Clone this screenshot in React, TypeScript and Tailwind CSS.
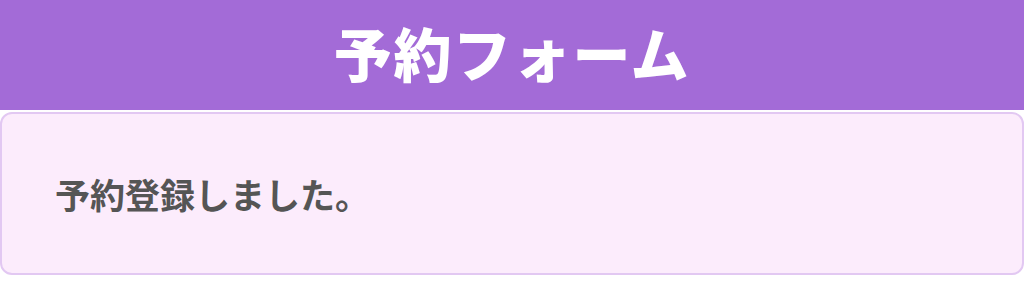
export default function App() {
  return (
    <div
      className="min-h-screen bg-white"
      style={{ fontFamily: '"Noto Sans CJK JP", "Noto Sans", sans-serif' }}
    >
      <header className="flex h-[110px] items-center justify-center bg-[#a36bd7] pb-[6px]">
        <h1 className="text-[58px] font-black leading-none tracking-[0.03em] text-white">
          予約フォーム
        </h1>
      </header>
      <section className="mt-[2px] flex h-[163px] items-center rounded-xl border-2 border-[#e2c8f2] bg-[#fcecfc] px-[53px]">
        <p className="text-[35px] font-bold leading-none text-[#555555]">
          予約登録しました。
        </p>
      </section>
    </div>
  );
}
